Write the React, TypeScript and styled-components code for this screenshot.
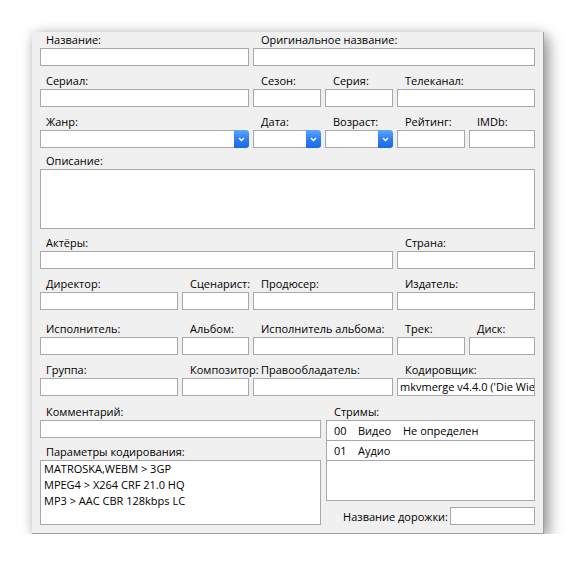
import React from "react";
import styled, { createGlobalStyle } from "styled-components";

const Global = createGlobalStyle`
  html, body { margin: 0; padding: 0; background: #ffffff; }
  body {
    font-family: "Open Sans", "Noto Sans", "DejaVu Sans", sans-serif;
    font-size: 11px;
    color: #000;
  }
  #root { padding: 32px 0 0 32px; }
`;

const Window = styled.div`
  width: 512px;
  height: 502px;
  box-sizing: border-box;
  background: #f0f0f0;
  border-right: 1px solid #a0a0a0;
  border-bottom: 1px solid #a0a0a0;
  padding: 0 8px 8px 8px;
  box-shadow: 0 0 10px rgba(0, 0, 0, 0.12), 5px 5px 14px rgba(0, 0, 0, 0.38);
`;

const Row = styled.div<{ $mt: number }>`
  display: grid;
  grid-template-columns: 138px 67px 68px 68px 68px 66px;
  column-gap: 4px;
  margin-top: ${(p) => p.$mt}px;
`;

const Field = styled.div<{ $col: string }>`
  grid-column: ${(p) => p.$col};
  display: flex;
  flex-direction: column;
  min-width: 0;
`;

const Label = styled.div<{ $indent?: number }>`
  height: 16px;
  line-height: 16px;
  padding-left: ${(p) => p.$indent ?? 8}px;
  white-space: nowrap;
  overflow: visible;
`;

const Input = styled.div<{ $h?: number }>`
  height: ${(p) => p.$h ?? 18}px;
  box-sizing: border-box;
  border: 1px solid #a8a8a8;
  background: #ffffff;
  padding: 0 2px;
  line-height: 16px;
  white-space: nowrap;
  overflow: hidden;
`;

const Combo = styled.div`
  display: flex;
  height: 18px;
`;

const ComboField = styled.div`
  flex: 1;
  box-sizing: border-box;
  border: 1px solid #a8a8a8;
  border-right: none;
  background: #ffffff;
`;

const ComboButton = styled.div`
  width: 15px;
  border-radius: 0 3px 3px 0;
  background: linear-gradient(#5ba7fb, #2a7cf0 55%, #1b6be2);
  display: flex;
  align-items: center;
  justify-content: center;
`;

const Bottom = styled.div`
  display: grid;
  grid-template-columns: 281px 209px;
  column-gap: 5px;
  margin-top: 8px;
`;

const Column = styled.div`
  display: flex;
  flex-direction: column;
  min-width: 0;
`;

const ListBox = styled.div`
  height: 65px;
  box-sizing: border-box;
  border: 1px solid #a8a8a8;
  background: #ffffff;
  padding: 0 3px;
  line-height: 16px;
`;

const Spacer = styled.div<{ $h: number }>`
  height: ${(p) => p.$h}px;
`;

const StreamList = styled.div`
  height: 81px;
  box-sizing: border-box;
  border: 1px solid #a8a8a8;
  background: #ffffff;
`;

const StreamRow = styled.div`
  display: grid;
  grid-template-columns: 24px 45px 1fr;
  height: 20px;
  box-sizing: border-box;
  line-height: 19px;
  padding-left: 7px;
  border-bottom: 1px solid #a8a8a8;
  white-space: nowrap;
`;

const TrackRow = styled.div`
  display: flex;
  justify-content: flex-end;
  align-items: center;
  gap: 2px;
  margin-top: 6px;
  height: 18px;
`;

const TrackInput = styled(Input)`
  width: 85px;
`;

const Chevron = () => (
  <svg width="7" height="5" viewBox="0 0 7 5">
    <path d="M1 1 L3.5 3.5 L6 1" fill="none" stroke="#ffffff" strokeWidth="1.4" />
  </svg>
);

const ComboBox = () => (
  <Combo>
    <ComboField />
    <ComboButton>
      <Chevron />
    </ComboButton>
  </Combo>
);

export default function App() {
  return (
    <>
      <Global />
      <Window>
        <Row $mt={0}>
          <Field $col="1 / 3">
            <Label $indent={6}>Название:</Label>
            <Input />
          </Field>
          <Field $col="3 / 7">
            <Label>Оригинальное название:</Label>
            <Input />
          </Field>
        </Row>

        <Row $mt={7}>
          <Field $col="1 / 3">
            <Label $indent={6}>Сериал:</Label>
            <Input />
          </Field>
          <Field $col="3 / 4">
            <Label>Сезон:</Label>
            <Input />
          </Field>
          <Field $col="4 / 5">
            <Label>Серия:</Label>
            <Input />
          </Field>
          <Field $col="5 / 7">
            <Label>Телеканал:</Label>
            <Input />
          </Field>
        </Row>

        <Row $mt={7}>
          <Field $col="1 / 3">
            <Label $indent={6}>Жанр:</Label>
            <ComboBox />
          </Field>
          <Field $col="3 / 4">
            <Label>Дата:</Label>
            <ComboBox />
          </Field>
          <Field $col="4 / 5">
            <Label>Возраст:</Label>
            <ComboBox />
          </Field>
          <Field $col="5 / 6">
            <Label>Рейтинг:</Label>
            <Input />
          </Field>
          <Field $col="6 / 7">
            <Label>IMDb:</Label>
            <Input />
          </Field>
        </Row>

        <Row $mt={5}>
          <Field $col="1 / 7">
            <Label $indent={6}>Описание:</Label>
            <Input $h={60} />
          </Field>
        </Row>

        <Row $mt={6}>
          <Field $col="1 / 5">
            <Label $indent={6}>Актёры:</Label>
            <Input />
          </Field>
          <Field $col="5 / 7">
            <Label>Страна:</Label>
            <Input />
          </Field>
        </Row>

        <Row $mt={7}>
          <Field $col="1 / 2">
            <Label $indent={6}>Директор:</Label>
            <Input />
          </Field>
          <Field $col="2 / 3">
            <Label>Сценарист:</Label>
            <Input />
          </Field>
          <Field $col="3 / 5">
            <Label>Продюсер:</Label>
            <Input />
          </Field>
          <Field $col="5 / 7">
            <Label>Издатель:</Label>
            <Input />
          </Field>
        </Row>

        <Row $mt={11}>
          <Field $col="1 / 2">
            <Label $indent={6}>Исполнитель:</Label>
            <Input />
          </Field>
          <Field $col="2 / 3">
            <Label>Альбом:</Label>
            <Input />
          </Field>
          <Field $col="3 / 5">
            <Label>Исполнитель альбома:</Label>
            <Input />
          </Field>
          <Field $col="5 / 6">
            <Label>Трек:</Label>
            <Input />
          </Field>
          <Field $col="6 / 7">
            <Label>Диск:</Label>
            <Input />
          </Field>
        </Row>

        <Row $mt={7}>
          <Field $col="1 / 2">
            <Label $indent={6}>Группа:</Label>
            <Input />
          </Field>
          <Field $col="2 / 3">
            <Label>Композитор:</Label>
            <Input />
          </Field>
          <Field $col="3 / 5">
            <Label>Правообладатель:</Label>
            <Input />
          </Field>
          <Field $col="5 / 7">
            <Label>Кодировщик:</Label>
            <Input>mkvmerge v4.4.0 ('Die Wie</Input>
          </Field>
        </Row>

        <Bottom>
          <Column>
            <Label $indent={6}>Комментарий:</Label>
            <Input />
            <Spacer $h={6} />
            <Label $indent={6}>Параметры кодирования:</Label>
            <ListBox>
              <div>MATROSKA,WEBM &gt; 3GP</div>
              <div>MPEG4 &gt; X264 CRF 21.0 HQ</div>
              <div>MP3 &gt; AAC CBR 128kbps LC</div>
            </ListBox>
          </Column>
          <Column>
            <Label>Стримы:</Label>
            <StreamList>
              <StreamRow>
                <span>00</span>
                <span>Видео</span>
                <span>Не определен</span>
              </StreamRow>
              <StreamRow>
                <span>01</span>
                <span>Аудио</span>
                <span />
              </StreamRow>
            </StreamList>
            <TrackRow>
              <span>Название дорожки:</span>
              <TrackInput />
            </TrackRow>
          </Column>
        </Bottom>
      </Window>
    </>
  );
}
